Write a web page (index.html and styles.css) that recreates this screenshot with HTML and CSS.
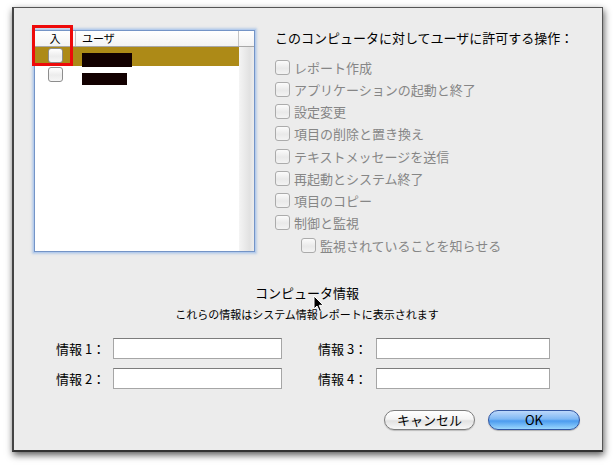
FILE: index.html
```html
<!DOCTYPE html>
<html lang="ja">
<head>
<meta charset="utf-8">
<title>コンピュータ情報</title>
<link rel="stylesheet" href="styles.css">
</head>
<body>
<div class="window">
  <div class="top">
    <div class="tablewrap">
      <div class="table">
        <div class="thead">
          <div class="th c1">入</div>
          <div class="th c2">ユーザ</div>
          <div class="th c3"></div>
        </div>
        <div class="tbody">
          <div class="rows">
            <div class="row sel">
              <div class="c1"><span class="cb tcb"></span></div>
              <div class="c2"><span class="redact r1"></span></div>
            </div>
            <div class="row">
              <div class="c1"><span class="cb tcb"></span></div>
              <div class="c2"><span class="redact r2"></span></div>
            </div>
          </div>
          <div class="scroll"></div>
        </div>
      </div>
      <div class="mark"></div>
    </div>
    <div class="perms">
      <div class="ptitle">このコンピュータに対してユーザに許可する操作：</div>
      <ul class="plist">
        <li><span class="cb dis"></span>レポート作成</li>
        <li><span class="cb dis"></span>アプリケーションの起動と終了</li>
        <li><span class="cb dis"></span>設定変更</li>
        <li><span class="cb dis"></span>項目の削除と置き換え</li>
        <li><span class="cb dis"></span>テキストメッセージを送信</li>
        <li><span class="cb dis"></span>再起動とシステム終了</li>
        <li><span class="cb dis"></span>項目のコピー</li>
        <li><span class="cb dis"></span>制御と監視</li>
        <li class="sub"><span class="cb dis"></span>監視されていることを知らせる</li>
      </ul>
    </div>
  </div>
  <div class="info">
    <div class="ititle">コンピュータ情報</div>
    <div class="isub">これらの情報はシステム情報レポートに表示されます</div>
    <div class="fields">
      <div class="field left"><span class="flabel">情報 1：</span><span class="input"></span></div>
      <div class="field right"><span class="flabel">情報 3：</span><span class="input"></span></div>
      <div class="field left"><span class="flabel">情報 2：</span><span class="input"></span></div>
      <div class="field right"><span class="flabel">情報 4：</span><span class="input"></span></div>
    </div>
  </div>
  <div class="buttons">
    <button class="btn cancel">キャンセル</button>
    <button class="btn ok">OK</button>
  </div>
  <svg class="cursor" width="12" height="18" viewBox="0 0 12 18">
    <path d="M1 1 L1 14 L4 11 L6.5 16.5 L8.5 15.6 L6.2 10.3 L10.3 10.3 Z" fill="#000" stroke="#fff" stroke-width="1"/>
  </svg>
</div>
</body>
</html>
```

FILE: styles.css
```css
* { box-sizing: border-box; }
html, body { margin: 0; padding: 0; background: #ffffff; }
body {
  width: 613px;
  height: 467px;
  overflow: hidden;
  font-family: "Noto Sans CJK JP", "Noto Sans", sans-serif;
  color: #000;
}
.window {
  position: relative;
  margin: 7px 0 0 12px;
  width: 591px;
  height: 445px;
  background: #ececec;
  border: 1px solid #555;
  border-left: 2px solid #444;
  border-bottom: 2px solid #333;
  box-shadow: 1px 3px 7px rgba(0,0,0,0.65);
}
.top {
  display: flex;
  align-items: flex-start;
  height: 248px;
  padding: 22px 0 0 20px;
  gap: 20px;
}
.tablewrap {
  position: relative;
  width: 221px;
  height: 222px;
  flex: none;
}
.table {
  width: 100%;
  height: 100%;
  background: #fff;
  border: 1px solid #7494c6;
  box-shadow: 0 0 0 1px #b4cbec, 0 0 2px 2px rgba(140,175,225,0.5);
  display: flex;
  flex-direction: column;
}
.thead {
  display: flex;
  height: 16px;
  border-bottom: 1px solid #a8a8a8;
  background: linear-gradient(#ffffff, #f3f3f3);
  font-size: 11px;
  line-height: 15px;
}
.th.c1 { width: 41px; text-align: center; border-right: 1px solid #c4c4c4; }
.th.c2 { flex: 1; padding-left: 6px; border-right: 1px solid #c4c4c4; }
.th.c3 { width: 15px; }
.tbody { flex: 1; display: flex; }
.rows { flex: 1; }
.scroll {
  width: 15px;
  background: linear-gradient(90deg, #f4f4f4, #e2e2e2 70%, #ececec);
}
.row {
  display: flex;
  height: 19px;
}
.row.sel { background: #ad8a17; }
.row .c1 {
  width: 41px;
  display: flex;
  justify-content: center;
  padding-top: 1px;
}
.row .c2 { flex: 1; padding-left: 6px; }
.redact { display: block; background: #120000; }
.r1 { width: 50px; height: 14px; margin-top: 6px; }
.r2 { width: 45px; height: 12px; margin-top: 7px; }
.mark {
  position: absolute;
  left: -2px;
  top: -5px;
  width: 41px;
  height: 41px;
  border: 3px solid #ee0a0a;
}
.cb {
  display: inline-block;
  width: 14px;
  height: 14px;
  border: 1px solid #8d8d8d;
  border-radius: 3px;
  background: linear-gradient(#ffffff, #ececec 55%, #f6f6f6);
  flex: none;
}
.tcb { width: 15px; height: 15px; }
.cb.dis { width: 15px; height: 15px; border-color: #ababab; background: linear-gradient(#fbfbfb, #e9e9e9 55%, #f3f3f3); }
.perms { padding-left: 0; }
.ptitle {
  font-size: 13px;
  line-height: 16px;
  white-space: nowrap;
}
.plist {
  list-style: none;
  margin: 10px 0 0 0;
  padding: 0;
}
.plist li {
  height: 22.25px;
  display: flex;
  align-items: center;
  gap: 4px;
  font-size: 13px;
  color: #868686;
  white-space: nowrap;
}
.plist li.sub { padding-left: 26px; }
.info { margin-top: 28px; }
.ititle {
  text-align: center;
  font-size: 13px;
  line-height: 18px;
  padding-right: 2px;
}
.isub {
  text-align: center;
  font-size: 11px;
  line-height: 16px;
  margin-top: 4px;
  padding-right: 2px;
}
.fields {
  margin-top: 16px;
  padding-left: 42px;
  display: grid;
  grid-template-columns: 226px 232px;
  column-gap: 36px;
  row-gap: 9px;
}
.field { display: flex; align-items: center; height: 21px; }
.flabel { font-size: 13px; white-space: nowrap; }
.left .flabel { width: 57px; }
.right .flabel { width: 58px; }
.input {
  flex: 1;
  height: 21px;
  background: #fff;
  border: 1px solid #a6a6a6;
  border-top-color: #7c7c7c;
}
.buttons {
  display: flex;
  justify-content: flex-end;
  gap: 13px;
  margin-top: 21px;
  padding-right: 22px;
}
.btn {
  height: 20px;
  border-radius: 10px;
  font-family: "Noto Sans CJK JP", "Noto Sans", sans-serif;
  font-size: 13px;
  line-height: 18px;
  padding: 0;
  color: #000;
}
.cancel {
  width: 91px;
  border: 1px solid #7d7d7d;
  background: linear-gradient(#ffffff, #f4f4f4 45%, #e2e2e2 55%, #f8f8f8);
  box-shadow: 0 1px 1px rgba(0,0,0,0.2);
}
.ok {
  width: 92px;
  border: 1px solid #2f54a2;
  background: linear-gradient(#bcd8fb, #7fb8f4 45%, #4b9bef 55%, #9ad6fd);
  box-shadow: 0 1px 1px rgba(0,0,0,0.25);
}
.cursor {
  position: absolute;
  left: 299px;
  top: 287px;
}
```
